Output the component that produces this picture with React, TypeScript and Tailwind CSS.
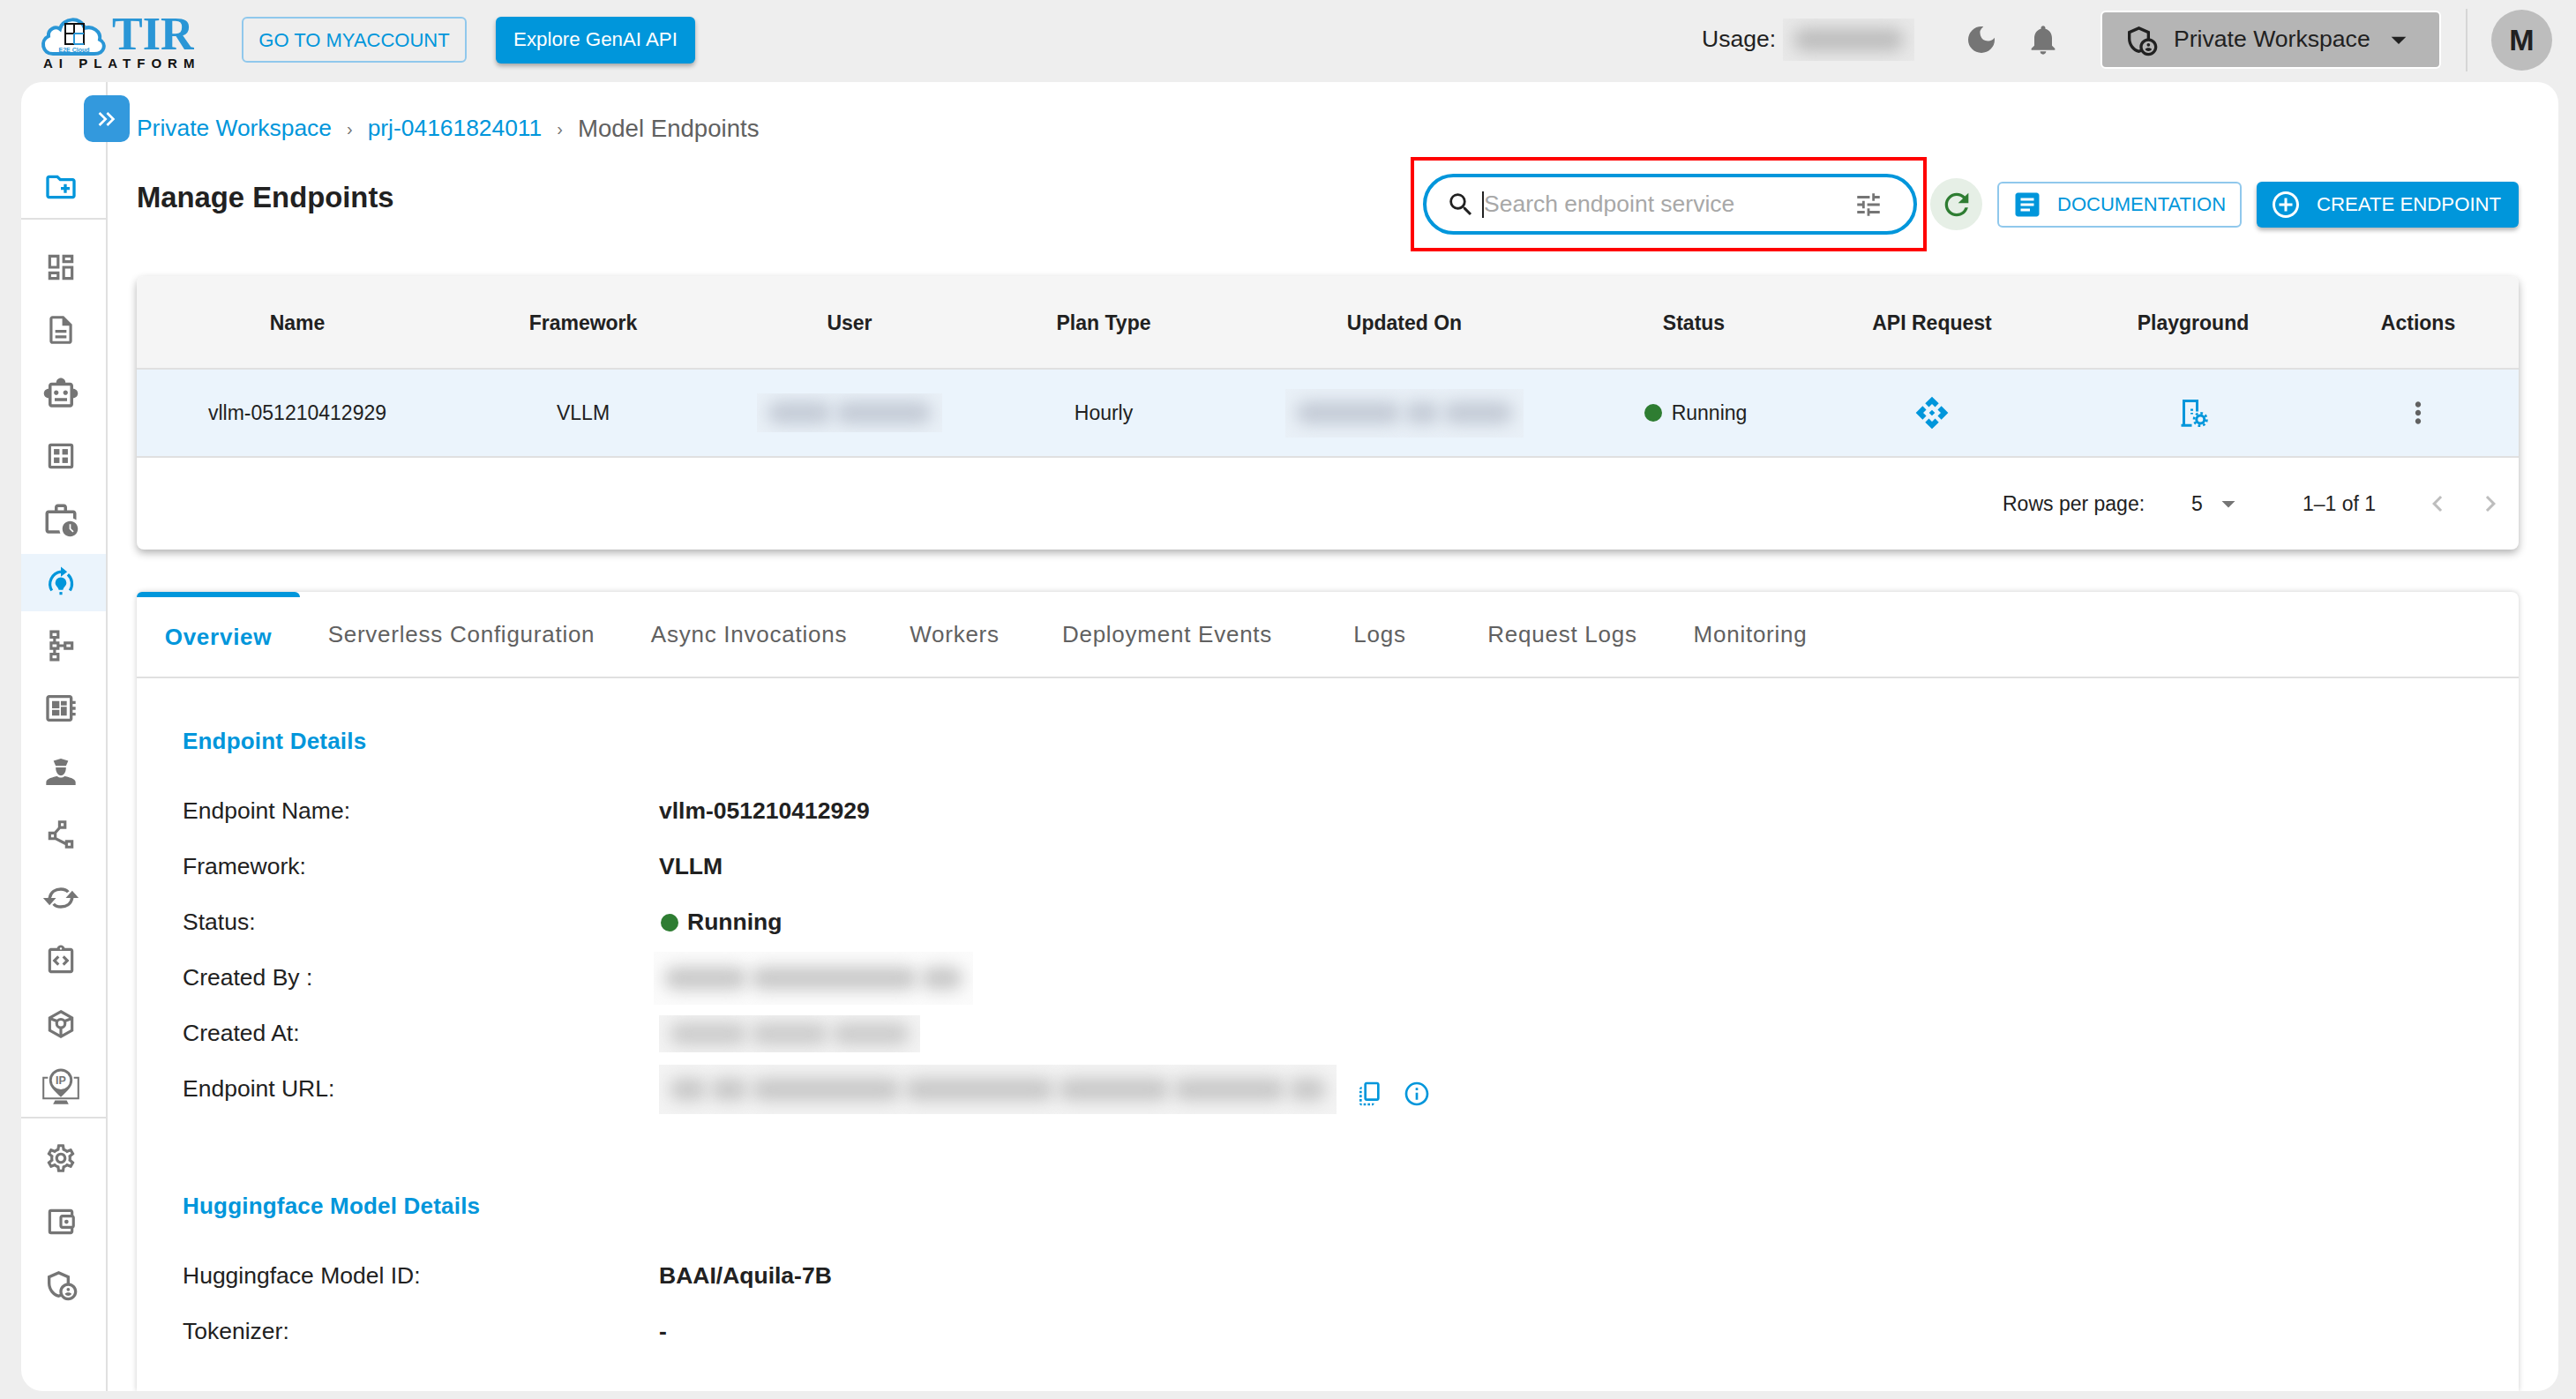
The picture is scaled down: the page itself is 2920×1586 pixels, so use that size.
import React from 'react';
import {
  MdOutlineCreateNewFolder, MdOutlineDashboard, MdOutlineDescription, MdOutlineSmartToy,
  MdOutlineWorkHistory, MdOutlineSchema, MdOutlineDeveloperBoard, MdOutlinePolyline,
  MdOutlineIntegrationInstructions, MdOutlineSettings, MdOutlineAccountBalanceWallet, MdOutlineAdminPanelSettings,
  MdDarkMode, MdNotifications, MdKeyboardDoubleArrowRight, MdSearch, MdTune, MdRefresh, MdArticle,
  MdAddCircleOutline, MdArrowDropDown, MdMoreVert, MdChevronLeft, MdChevronRight, MdOutlineCopyAll,
  MdInfoOutline, MdApi,
} from 'react-icons/md';

function Logo() {
  return (
    <svg width="190" height="70" viewBox="0 0 190 70" className="shrink-0 mt-[3px]">
      <path d="M14 49 C2 49 -1 34 9 29 C8 21 17 17 22 21 C25 8 46 6 50 20 C58 17 69 23 67 33 C75 37 73 49 61 49 Z" fill="#fff" stroke="#2a96d6" strokeWidth="4" />
      <rect x="28" y="15" width="21" height="23" fill="none" stroke="#111" strokeWidth="2" />
      <path d="M38 15 V38 M28 26 H38" stroke="#111" strokeWidth="2" />
      <path d="M38 26 H49 M38 38 H49 M38 26 V38" stroke="#2a96d6" strokeWidth="2" fill="none" />
      <text x="38" y="47" textAnchor="middle" fontSize="7" fontWeight="700" fill="#2a96d6" fontFamily="Liberation Sans">E2E Cloud</text>
      <text x="81" y="44" fontSize="52" fontWeight="700" fill="#2a96d6" fontFamily="Liberation Serif">TIR</text>
      <text x="3" y="65" fontSize="15" fontWeight="700" fill="#111" fontFamily="Liberation Sans" letterSpacing="7">AI PLATFORM</text>
    </svg>
  );
}

function ActiveIcon() {
  return (
    <svg width="38" height="38" viewBox="0 0 24 24" fill="none" stroke="#0096db" strokeWidth="2">
      <path d="M5.500 18 A9 9 0 0 1 12 4.500" />
      <path d="M18.500 18 A9 9 0 0 0 17 6.500" />
      <path d="M12 1 L16.500 4.500 L12 8 Z" fill="#0096db" stroke="none" />
      <path d="M8 12.500 a4 4 0 1 1 8 0 c0 2 -2 3 -2.500 5 h-3 c-.5 -2 -2.500 -3 -2.500 -5z" fill="#0096db" stroke="none" />
      <path d="M11 20 h2" />
    </svg>
  );
}

function GridBoxIcon() {
  return (
    <svg width="38" height="38" viewBox="0 0 24 24" fill="#757575">
      <path d="M5 3 H19 A2 2 0 0 1 21 5 V19 A2 2 0 0 1 19 21 H5 A2 2 0 0 1 3 19 V5 A2 2 0 0 1 5 3 Z M5 5 V19 H19 V5 Z" fillRule="evenodd" />
      <rect x="7" y="7" width="4" height="4" />
      <rect x="13" y="7" width="4" height="4" />
      <rect x="7" y="13" width="4" height="4" />
      <rect x="13" y="13" width="4" height="4" />
    </svg>
  );
}

function PoliceIcon() {
  return (
    <svg width="40" height="40" viewBox="0 0 24 24" fill="#757575">
      <path d="M7 4.500 L12 3 L17 4.500 L15.500 8 H8.500 Z" />
      <path d="M8.500 9 H15.500 C15.500 13 13.500 14.500 12 14.500 C10.500 14.500 8.500 13 8.500 9 Z" />
      <path d="M2 21 V19 C2 16.500 7 15.500 9.500 15 C11 16.200 13 16.200 14.500 15 C17 15.500 22 16.500 22 19 V21 Z" />
    </svg>
  );
}

function SyncIcon() {
  return (
    <svg width="44" height="44" viewBox="0 0 24 24" fill="none" stroke="#757575" strokeWidth="1.900">
      <path d="M5 12.500 C5.500 8 9 6.500 12 6.500 C14 6.500 15.500 7 16.500 8.300" />
      <path d="M19 11.500 C18.500 16 15 17.500 12 17.500 C10 17.500 8.500 17 7.500 15.700" />
      <path d="M1 12 L9 12 L5 16.500 Z" fill="#757575" stroke="none" />
      <path d="M15 12 L23 12 L19 7.500 Z" fill="#757575" stroke="none" />
    </svg>
  );
}

function BoxIcon() {
  return (
    <svg width="38" height="38" viewBox="0 0 24 24" fill="none" stroke="#757575" strokeWidth="2">
      <path d="M12 3 L20 7.500 V16.500 L12 21 L4 16.500 V7.500 Z" />
      <circle cx="12" cy="11.500" r="3" />
      <path d="M4.500 8 L9.500 10 M19.500 8 L14.500 10 M12 14.500 V20.500" />
    </svg>
  );
}

function IpIcon() {
  return (
    <svg width="44" height="44" viewBox="0 0 30 30" fill="none">
      <path d="M5 8 H1.500 V24 H28.500 V8 H25" stroke="#757575" strokeWidth="1.400" />
      <path d="M9 28.500 H21 L19.500 25.500 H10.500 Z" fill="#757575" />
      <path d="M15 23 C10 18 6 15 6 10 A9 9 0 0 1 24 10 C24 15 20 18 15 23 Z" fill="#757575" />
      <circle cx="15" cy="10" r="7" fill="#fff" />
      <text x="15" y="13" textAnchor="middle" fontSize="8.500" fontWeight="700" fill="#757575" fontFamily="Liberation Sans">IP</text>
    </svg>
  );
}

function PlaygroundIcon() {
  return (
    <svg width="36" height="36" viewBox="0 0 24 24" fill="none" stroke="#0096db" strokeWidth="2">
      <path d="M5 21 V3 H15 V11" />
      <path d="M3 21.500 H11" />
      <path d="M11 9 V13" strokeDasharray="1.500 1.500" />
      <circle cx="17.500" cy="17" r="3" />
      <circle cx="17.500" cy="17" r="4.800" strokeWidth="1.800" strokeDasharray="1.800 1.950" />
    </svg>
  );
}

function NavItem({ children, active }: { children: React.ReactNode; active?: boolean }) {
  return (
    <div className={active ? 'h-[65px] pr-[6px] flex items-center justify-center bg-[#ebf4fc]' : 'h-[65px] pr-[6px] flex items-center justify-center'}>
      {children}
    </div>
  );
}

function Sidebar() {
  const gray = 'text-[#757575] text-[38px]';
  return (
    <div className="w-[98px] shrink-0 border-r-2 border-[#e0e0e0]">
      <div className="h-[156px] pt-[83px] border-b-2 border-[#e0e0e0]">
        <div className="h-[71px] pr-[6px] flex items-center justify-center">
          <MdOutlineCreateNewFolder className="text-[#0096db] text-[40px]" />
        </div>
      </div>
      <div className="pt-[21px] flex flex-col gap-[6.5px] border-b-2 border-[#e0e0e0] pb-[1px]">
        <NavItem><MdOutlineDashboard className={gray} /></NavItem>
        <NavItem><MdOutlineDescription className={gray} /></NavItem>
        <NavItem><MdOutlineSmartToy className="text-[#757575] text-[42px]" /></NavItem>
        <NavItem><GridBoxIcon /></NavItem>
        <NavItem><MdOutlineWorkHistory className="text-[#757575] text-[42px]" /></NavItem>
        <NavItem active><ActiveIcon /></NavItem>
        <NavItem><MdOutlineSchema className={gray} /></NavItem>
        <NavItem><MdOutlineDeveloperBoard className="text-[#757575] text-[40px]" /></NavItem>
        <NavItem><PoliceIcon /></NavItem>
        <NavItem><MdOutlinePolyline className={gray} /></NavItem>
        <NavItem><SyncIcon /></NavItem>
        <NavItem><MdOutlineIntegrationInstructions className={gray} /></NavItem>
        <NavItem><BoxIcon /></NavItem>
        <NavItem><IpIcon /></NavItem>
      </div>
      <div className="pt-[13px] flex flex-col gap-[6.5px]">
        <NavItem><MdOutlineSettings className={gray} /></NavItem>
        <NavItem><MdOutlineAccountBalanceWallet className={gray} /></NavItem>
        <NavItem><MdOutlineAdminPanelSettings className="text-[#757575] text-[40px]" /></NavItem>
      </div>
    </div>
  );
}

// redacted values in the screenshot: lumps of grey behind a faint box
function Blur({ w, h, tone, bg, lumps }: { w: string; h: string; tone: string; bg: string; lumps: number[] }) {
  return (
    <div className={`${w} ${h} ${bg} overflow-hidden flex items-center gap-[4px] px-[12px] shrink-0`}>
      {lumps.map((n, i) => (
        <div key={i} className={`h-[26px] ${tone} blur-[9px] rounded-full`} style={{ flexGrow: n, flexBasis: 0 }} />
      ))}
    </div>
  );
}

const columns = ['Name', 'Framework', 'User', 'Plan Type', 'Updated On', 'Status', 'API Request', 'Playground', 'Actions'];
const tabs = [
  { label: 'Serverless Configuration', w: 'w-[366px]' },
  { label: 'Async Invocations', w: 'w-[286px]' },
  { label: 'Workers', w: 'w-[180px]' },
  { label: 'Deployment Events', w: 'w-[302px]' },
  { label: 'Logs', w: 'w-[180px]' },
  { label: 'Request Logs', w: 'w-[234px]' },
  { label: 'Monitoring', w: 'w-[192px]' },
];

function Row({ label, children }: { label: string; children: React.ReactNode }) {
  return (
    <div className="h-[63px] flex items-center text-[26.5px] text-[#212121]">
      <div className="w-[540px] shrink-0">{label}</div>
      {children}
    </div>
  );
}

export default function App() {
  return (
    <div className="w-[2920px] h-[1586px] bg-[#eeeeee] overflow-hidden font-['Liberation_Sans',sans-serif]">
      <header className="h-[93px] flex items-center pl-[46px] pr-[27px] pb-[3px]">
        <Logo />
        <button className="ml-[38px] w-[255px] h-[52px] rounded-[6px] border-2 border-[#90c8ec] text-[#0096db] text-[22px]">GO TO MYACCOUNT</button>
        <button className="ml-[33px] w-[226px] h-[53px] rounded-[6px] bg-[#0096db] text-white text-[22.3px] shadow-[0_3px_5px_rgba(0,0,0,0.3)]">Explore GenAI API</button>
        <div className="flex-1" />
        <span className="text-[26.5px] text-[#212121]">Usage:</span>
        <div className="ml-[8px]"><Blur w="w-[149px]" h="h-[48px]" tone="bg-[#bdbdbd]" bg="bg-[#e8e8e8]" lumps={[1]} /></div>
        <MdDarkMode className="ml-[56px] text-[#757575] text-[40px]" />
        <MdNotifications className="ml-[30px] text-[#757575] text-[40px]" />
        <div className="ml-[45px] w-[386px] h-[66px] rounded-[6px] bg-[#b5b5b5] border-2 border-white flex items-center pl-[24px] text-[#212121] text-[26.6px]">
          <MdOutlineAdminPanelSettings className="text-[#212121] text-[40px] mr-[17px]" />
          Private Workspace
          <MdArrowDropDown className="ml-[12px] text-[40px]" />
        </div>
        <div className="ml-[28px] w-[2px] h-[71px] bg-[#d6d6d6]" />
        <div className="ml-[27px] w-[69px] h-[69px] rounded-full bg-[#bdbdbd] flex items-center justify-center text-[34px] font-bold text-[#212121]">M</div>
      </header>

      <div className="relative ml-[24px] mr-[20px] h-[1484px] bg-white rounded-[24px] overflow-hidden flex">
        <button className="absolute left-[71px] top-[15px] w-[52px] h-[53px] rounded-[10px] bg-[#3399dd] flex items-center justify-center text-white text-[32px]">
          <MdKeyboardDoubleArrowRight />
        </button>
        <Sidebar />
        <main className="flex-1 pl-[33px] pr-[45px] flex flex-col min-w-0">
          <div className="pt-[33px] h-[73px] flex items-center text-[26.4px]">
            <span className="text-[#0096db]">Private Workspace</span>
            <span className="mx-[17px] text-[#757575] text-[20px]">›</span>
            <span className="text-[#0096db]">prj-04161824011</span>
            <span className="mx-[17px] text-[#757575] text-[20px]">›</span>
            <span className="text-[#616161] text-[27.6px]">Model Endpoints</span>
          </div>

          <div className="mt-[12px] h-[107px] flex items-center">
            <h1 className="self-start mt-[27px] text-[32.8px] leading-[38px] font-bold text-[#212121]">Manage Endpoints</h1>
            <div className="flex-1" />
            <div className="w-[585px] h-[107px] border-4 border-[#ff0000] flex items-center pl-[10px]">
              <div className="w-[560px] h-[69px] rounded-full border-4 border-[#0096db] flex items-center pl-[22px] pr-[34px]">
                <MdSearch className="text-[#212121] text-[34px]" />
                <div className="ml-[7px] w-[2px] h-[30px] bg-[#212121]" />
                <span className="text-[26.5px] text-[#a8a8a8] pt-[1px]">Search endpoint service</span>
                <div className="flex-1" />
                <MdTune className="text-[#757575] text-[34px]" />
              </div>
            </div>
            <div className="ml-[4px] w-[59px] h-[59px] rounded-full bg-[#e6efe6] flex items-center justify-center">
              <MdRefresh className="text-[#2e7d32] text-[40px]" />
            </div>
            <button className="ml-[17px] w-[277px] h-[52px] rounded-[6px] border-2 border-[#90c8ec] flex items-center pl-[14px] text-[#0096db] text-[22px]">
              <MdArticle className="text-[36px] mr-[16px]" />
              DOCUMENTATION
            </button>
            <button className="ml-[17px] w-[297px] h-[52px] rounded-[6px] bg-[#0096db] flex items-center pl-[15px] text-white text-[22.2px] shadow-[0_3px_5px_rgba(0,0,0,0.3)]">
              <MdAddCircleOutline className="text-[36px] mr-[17px]" />
              CREATE ENDPOINT
            </button>
          </div>

          <section className="mt-[28px] h-[310px] shrink-0 rounded-[8px] bg-white overflow-hidden shadow-[0_4px_10px_rgba(0,0,0,0.3)]">
            <div className="h-[106px] pt-[2px] grid grid-cols-[364px_284px_320px_256px_426px_230px_310px_282px_228px] items-center text-center bg-[#f5f5f5] border-b-2 border-[#e0e0e0] text-[23px] font-bold text-[#212121]">
              {columns.map((c) => (
                <div key={c}>{c}</div>
              ))}
            </div>
            <div className="h-[100px] grid grid-cols-[364px_284px_320px_256px_426px_230px_310px_282px_228px] items-center justify-items-center bg-[#ebf4fc] border-b-2 border-[#e0e0e0] text-[23px] text-[#212121]">
              <div className="pt-[1px]">vllm-051210412929</div>
              <div className="pt-[1px]">VLLM</div>
              <Blur w="w-[210px]" h="h-[44px]" tone="bg-[#c4cbd6]" bg="bg-[#e9f0f7]" lumps={[2, 3]} />
              <div className="pt-[1px]">Hourly</div>
              <Blur w="w-[270px]" h="h-[55px]" tone="bg-[#c4cbd6]" bg="bg-[#e9f0f7]" lumps={[3, 1, 2]} />
              <div className="flex items-center gap-[11px] pl-[4px]">
                <span className="w-[20px] h-[20px] rounded-full bg-[#2e7d32]" />
                Running
              </div>
              <MdApi className="text-[#0096db] text-[40px]" />
              <PlaygroundIcon />
              <MdMoreVert className="text-[#616161] text-[38px]" />
            </div>
            <div className="h-[104px] flex items-center text-[23px] text-[#212121]">
              <span className="ml-[2115px]">Rows per page:</span>
              <span className="ml-[53px]">5</span>
              <MdArrowDropDown className="ml-[11px] text-[#757575] text-[36px]" />
              <span className="ml-[66px]">1–1 of 1</span>
              <MdChevronLeft className="ml-[52px] text-[#bdbdbd] text-[36px]" />
              <MdChevronRight className="ml-[24px] text-[#bdbdbd] text-[36px]" />
            </div>
          </section>

          <section className="relative mt-[48px] flex-1 rounded-t-[8px] bg-white shadow-[0_0_6px_rgba(0,0,0,0.2)]">
            <div className="absolute left-0 top-0 w-[185px] h-[6px] rounded-t-[8px] bg-[#0096db]" />
            <div className="h-[98px] flex items-center border-b-2 border-[#e0e0e0] text-[26px] tracking-[0.75px] text-[#616161]">
              <div className="w-[185px] text-center text-[#0096db] font-bold mt-[6px]">Overview</div>
              {tabs.map((t) => (
                <div key={t.label} className={`${t.w} text-center`}>{t.label}</div>
              ))}
            </div>
            <div className="pl-[52px]">
              <h2 className="pt-[48px] h-[94px] flex items-center text-[26px] tracking-[0.2px] font-bold text-[#0096db]">Endpoint Details</h2>
              <div className="mt-[25px]">
                <Row label="Endpoint Name:"><b>vllm-051210412929</b></Row>
                <Row label="Framework:"><b>VLLM</b></Row>
                <Row label="Status:">
                  <span className="ml-[2px] w-[20px] h-[20px] rounded-full bg-[#2e7d32] mr-[10px]" />
                  <b>Running</b>
                </Row>
                <Row label="Created By :">
                  <div className="-ml-[6px]"><Blur w="w-[362px]" h="h-[60px]" tone="bg-[#c8c8c8]" bg="bg-[#fbfbfb]" lumps={[2, 4, 1]} /></div>
                </Row>
                <Row label="Created At:">
                  <Blur w="w-[296px]" h="h-[42px]" tone="bg-[#cccccc]" bg="bg-[#f3f3f3]" lumps={[1, 1, 1]} />
                </Row>
                <Row label="Endpoint URL:">
                  <div className="flex items-center">
                    <Blur w="w-[768px]" h="h-[56px]" tone="bg-[#c8c8c8]" bg="bg-[#f3f3f3]" lumps={[1, 1, 4, 4, 3, 3, 1]} />
                    <MdOutlineCopyAll className="ml-[22px] mt-[10px] text-[#0096db] text-[32px]" />
                    <MdInfoOutline className="ml-[21px] mt-[10px] text-[#0096db] text-[32px]" />
                  </div>
                </Row>
              </div>
              <h2 className="mt-[78px] h-[46px] flex items-center text-[26px] tracking-[0.2px] font-bold text-[#0096db]">Huggingface Model Details</h2>
              <div className="mt-[25px]">
                <Row label="Huggingface Model ID:"><b>BAAI/Aquila-7B</b></Row>
                <Row label="Tokenizer:"><b>-</b></Row>
              </div>
            </div>
          </section>
        </main>
      </div>
    </div>
  );
}
